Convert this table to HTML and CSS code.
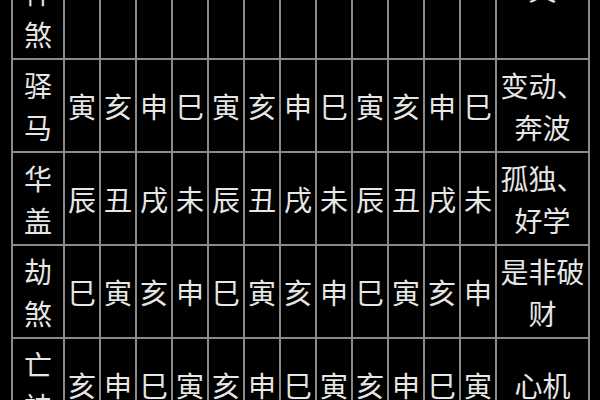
FILE: index.html
```html
<!DOCTYPE html>
<html lang="zh-CN">
<head>
<meta charset="utf-8">
<link rel="stylesheet" href="styles.css">
</head>
<body>
<table class="grid">
  <colgroup>
    <col class="c-name">
    <col class="c-d"><col class="c-d"><col class="c-d"><col class="c-d">
    <col class="c-d"><col class="c-d"><col class="c-d"><col class="c-d">
    <col class="c-d"><col class="c-d"><col class="c-d"><col class="c-d">
    <col class="c-note">
  </colgroup>
  <tr>
    <td class="name">神煞</td>
    <td></td><td></td><td></td><td></td><td></td><td></td>
    <td></td><td></td><td></td><td></td><td></td><td></td>
    <td class="note head-note"><div class="lift">含<br>义</div></td>
  </tr>
  <tr>
    <td class="name">驿马</td>
    <td>寅</td><td>亥</td><td>申</td><td>巳</td><td>寅</td><td>亥</td>
    <td>申</td><td>巳</td><td>寅</td><td>亥</td><td>申</td><td>巳</td>
    <td class="note">变动、奔波</td>
  </tr>
  <tr>
    <td class="name">华盖</td>
    <td>辰</td><td>丑</td><td>戌</td><td>未</td><td>辰</td><td>丑</td>
    <td>戌</td><td>未</td><td>辰</td><td>丑</td><td>戌</td><td>未</td>
    <td class="note">孤独、好学</td>
  </tr>
  <tr>
    <td class="name">劫煞</td>
    <td>巳</td><td>寅</td><td>亥</td><td>申</td><td>巳</td><td>寅</td>
    <td>亥</td><td>申</td><td>巳</td><td>寅</td><td>亥</td><td>申</td>
    <td class="note">是非破财</td>
  </tr>
  <tr>
    <td class="name">亡神</td>
    <td>亥</td><td>申</td><td>巳</td><td>寅</td><td>亥</td><td>申</td>
    <td>巳</td><td>寅</td><td>亥</td><td>申</td><td>巳</td><td>寅</td>
    <td class="note">心机</td>
  </tr>
</table>
</body>
</html>
```
FILE: styles.css
```css
html, body {
  margin: 0;
  padding: 0;
  background: #000;
  overflow: hidden;
}

.grid {
  margin: -35px 0 0 11px;
  border-collapse: collapse;
  table-layout: fixed;
  width: 577px;
  font-family: "Noto Sans CJK SC", "Noto Sans", sans-serif;
  font-size: 28px;
  color: #e6e6e6;
}

.c-name { width: 52px; }
.c-d { width: 36px; }
.c-note { width: 93px; }

.grid td {
  border: 2px solid #8a8a8a;
  height: 91px;
  padding: 0;
  text-align: center;
  vertical-align: middle;
  line-height: 42px;
}

.grid td.head-note {
  vertical-align: top;
}

.lift {
  margin-top: -41px;
}
```
